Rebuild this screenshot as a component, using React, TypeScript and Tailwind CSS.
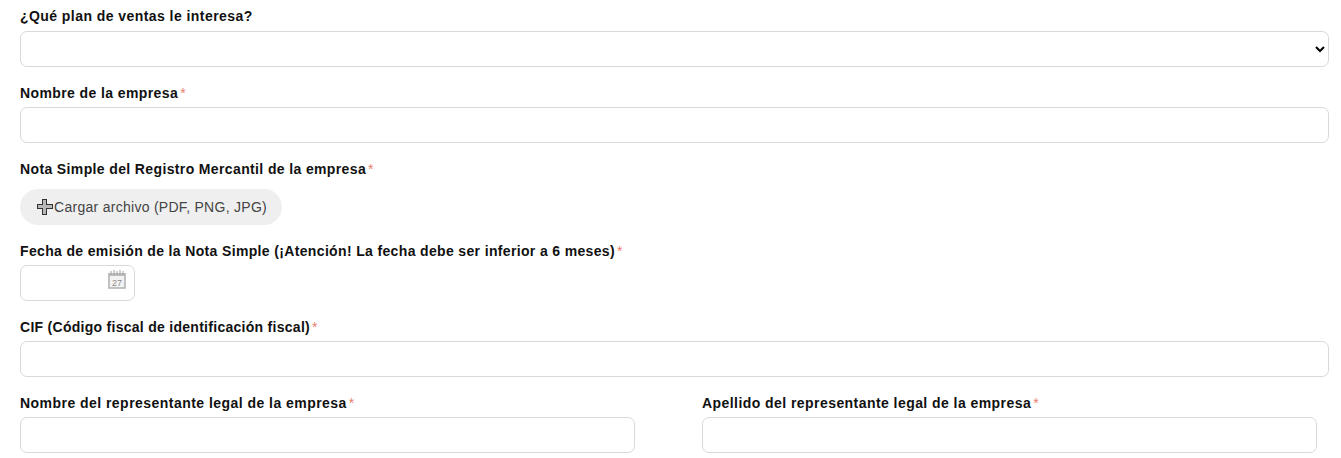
const inputCls =
  "block h-9 rounded-[7px] border border-[#d9d9d9] bg-white outline-none";

function Label({
  text,
  required = true,
  className = "",
}: {
  text: string;
  required?: boolean;
  className?: string;
}) {
  return (
    <label className={`block h-5 mb-[4px] text-[14px] leading-5 font-bold text-[#111] ${className}`}>
      {text}
      {required && <span className="ml-[2px] font-normal text-[#e8806f]">*</span>}
    </label>
  );
}

function CalendarIcon() {
  return (
    <svg width="18" height="19" viewBox="0 0 18 19" className="absolute left-[88px] top-[5px]">
      <rect x="1" y="4" width="16" height="14" fill="#f2f2f2" stroke="#b0b0b0" strokeWidth="1.5" />
      <rect x="0" y="3" width="18" height="3" fill="#bdbdbd" />
      <path d="M3 1v4M6 0v5M9 1v4M12 0v5M15 1v4" stroke="#a0a0a0" strokeWidth="1" />
      <text x="9" y="16" textAnchor="middle" fontSize="9" fontFamily="Liberation Sans" fill="#8e8e8e">
        27
      </text>
    </svg>
  );
}

function PlusIcon() {
  return (
    <svg width="16" height="16" viewBox="0 0 16 16" className="shrink-0">
      <path
        d="M5.5 .5h4v5h6v4h-6v6h-4v-6h-5v-4h5z"
        fill="#b8b8b8"
        stroke="#333"
        strokeWidth="1"
        shapeRendering="crispEdges"
      />
    </svg>
  );
}

export default function App() {
  return (
    <div className="h-[458px] w-[1341px] overflow-hidden bg-white pl-5 pt-[6px] font-['Liberation_Sans',Arial,sans-serif]">
      <div className="w-[1309px]">
        <Label
          text="¿Qué plan de ventas le interesa?"
          required={false}
          className="mb-[5px] tracking-[0.44px]"
        />
        <select className={`${inputCls} w-full pl-2 text-[13px]`} />

        <div className="mt-[16px]">
          <Label text="Nombre de la empresa" className="tracking-[0.4px]" />
          <input className={`${inputCls} w-full`} />
        </div>

        <div className="mt-[16px]">
          <Label text="Nota Simple del Registro Mercantil de la empresa" className="tracking-[0.37px]" />
          <button className="mt-[10px] flex h-9 w-[262px] items-center rounded-full bg-[#efefef] pl-[17px] text-[14px] tracking-[0.28px] text-[#444]">
            <PlusIcon />
            <span className="ml-px">Cargar archivo (PDF, PNG, JPG)</span>
          </button>
        </div>

        <div className="mt-[16px]">
          <Label
            text="Fecha de emisión de la Nota Simple (¡Atención! La fecha debe ser inferior a 6 meses)"
            className="tracking-[0.35px]"
          />
          <div className="relative w-[115px]">
            <input className={`${inputCls} w-full`} />
            <CalendarIcon />
          </div>
        </div>

        <div className="mt-[16px]">
          <Label text="CIF (Código fiscal de identificación fiscal)" className="tracking-[0.28px]" />
          <input className={`${inputCls} w-full`} />
        </div>

        <div className="mt-[16px] flex gap-[67px]">
          <div className="w-[615px]">
            <Label text="Nombre del representante legal de la empresa" className="tracking-[0.46px]" />
            <input className={`${inputCls} w-full`} />
          </div>
          <div className="w-[615px]">
            <Label text="Apellido del representante legal de la empresa" className="tracking-[0.44px]" />
            <input className={`${inputCls} w-full`} />
          </div>
        </div>
      </div>
    </div>
  );
}
